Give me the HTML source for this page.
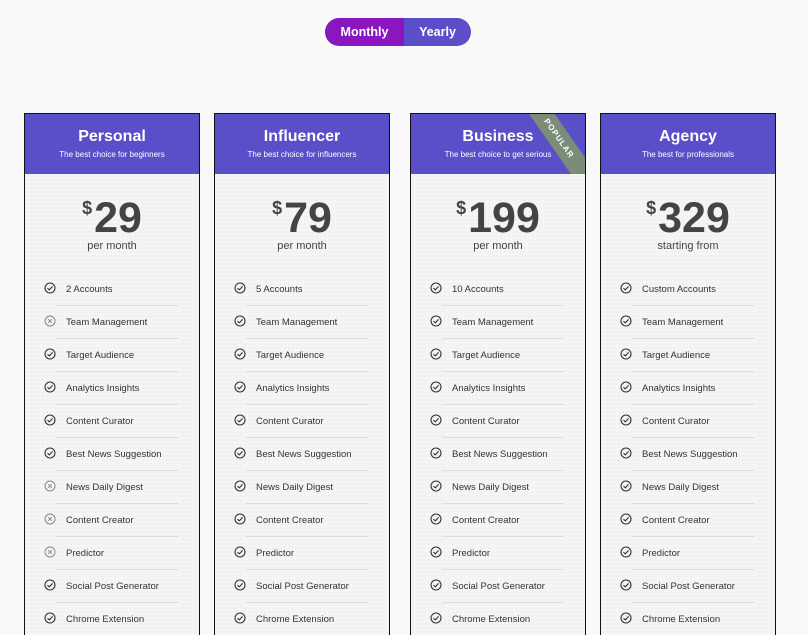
<!DOCTYPE html>
<html style="height:635px;overflow:hidden"><head><style>
*{margin:0;padding:0;box-sizing:border-box}
body{width:808px;height:635px;background:#f9f9f9;font-family:"Liberation Sans",sans-serif;overflow:hidden;position:relative}
.tog{position:absolute;left:325px;top:18px;width:146px;height:28px;border-radius:14px;overflow:hidden;display:flex;font-weight:bold;font-size:12.5px;color:#fff}
.tog div{display:flex;align-items:center;justify-content:center}
.card{position:absolute;top:113px;width:176px;height:540px;border:1px solid #111;background:#f5f5f5;background-image:radial-gradient(#e3e3e3 0.6px,transparent 0.8px);background-size:4px 4px;overflow:hidden}
.hd{height:60px;background:#5a4fc8;color:#fff;text-align:center;position:relative;overflow:hidden}
.hd h2{font-size:16px;padding-top:14px;line-height:18px}
.hd p{font-size:8px;margin-top:4px}
.price{text-align:center;margin-top:24px;color:#444;font-weight:bold;font-size:43px;line-height:40px;letter-spacing:0}
.price sup{font-size:18px;vertical-align:top;line-height:20px;margin-right:2px}
.per{text-align:center;font-size:11px;color:#444;margin-top:2px}
ul{list-style:none;margin-top:31px}
li{height:33px;position:relative;font-size:9.5px;color:#333;padding-left:41px;line-height:14px}
li:after{content:"";position:absolute;left:31px;right:21px;top:22px;border-top:1px solid #ddd}
li svg{position:absolute;left:19px;top:-1px}
.rib{position:absolute;right:-26px;top:14px;width:104px;height:21px;background:#7b8c79;transform:rotate(55deg);color:#fff;font-size:8px;font-weight:bold;text-align:center;line-height:21px;letter-spacing:1px}
</style></head><body>
<div class="tog"><div style="background:#8a16c0;width:79px">Monthly</div><div style="background:#5a4fc8;width:67px">Yearly</div></div>
<div id="c"></div>
<script>
const ok='<svg width="12" height="12" viewBox="0 0 12 12"><circle cx="6" cy="6" r="5" fill="none" stroke="#333" stroke-width="1.1"/><path d="M3.5 6.2l1.8 1.7 3.3-3.5" fill="none" stroke="#333" stroke-width="1.1"/></svg>';
const no='<svg width="12" height="12" viewBox="0 0 12 12"><circle cx="6" cy="6" r="5" fill="none" stroke="#888" stroke-width="1"/><path d="M4.2 4.2l3.6 3.6M7.8 4.2l-3.6 3.6" stroke="#888" stroke-width="1"/></svg>';
const feats=["Team Management","Target Audience","Analytics Insights","Content Curator","Best News Suggestion","News Daily Digest","Content Creator","Predictor","Social Post Generator","Chrome Extension"];
const cards=[
[24,"Personal","The best choice for beginners","29","per month","2 Accounts",[1,0,1,1,1,1,0,0,0,1,1]],
[214,"Influencer","The best choice for influencers","79","per month","5 Accounts",[1,1,1,1,1,1,1,1,1,1,1]],
[410,"Business","The best choice to get serious","199","per month","10 Accounts",[1,1,1,1,1,1,1,1,1,1,1]],
[600,"Agency","The best for professionals","329","starting from","Custom Accounts",[1,1,1,1,1,1,1,1,1,1,1]]];
let h='';
cards.forEach((c,i)=>{
 let li=[c[5]].concat(feats).map((f,j)=>'<li>'+(c[6][j]?ok:no)+f+'</li>').join('');
 h+=`<div class="card" style="left:${c[0]}px"><div class="hd"><h2>${c[1]}</h2><p>${c[2]}</p>${i==2?'<div class="rib">POPULAR</div>':''}</div><div class="price"><sup>$</sup>${c[3]}</div><div class="per">${c[4]}</div><ul>${li}</ul></div>`;
});
document.getElementById('c').innerHTML=h;
</script>
</body></html>
